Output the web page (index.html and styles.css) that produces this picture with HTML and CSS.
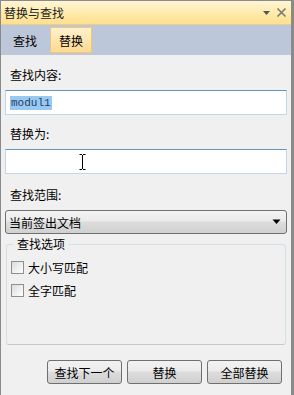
FILE: index.html
```html
<!DOCTYPE html>
<html>
<head>
  <meta charset="utf-8">
  <meta name="viewport" content="width=device-width, initial-scale=1.0">
  <link rel="stylesheet" href="styles.css">
</head>
<body>
  <div class="panel">
    <div class="title-bar">
      <div class="title-text">替换与查找</div>
      <div class="title-buttons">
        <svg class="pin" width="9" height="6" viewBox="0 0 9 6"><path d="M1 1h7L4.5 5z" fill="#555"/></svg>
        <svg class="close" width="11" height="11" viewBox="0 0 11 11"><path d="M1.5 1.5l8 8M9.5 1.5l-8 8" stroke="#777" stroke-width="1.6"/></svg>
      </div>
    </div>
    <div class="tabs">
      <div class="tab">查找</div>
      <div class="tab active">替换</div>
    </div>
    <div class="content">
      <div class="label">查找内容:</div>
      <div class="textbox"><span class="selected">modul1</span></div>
      <div class="label">替换为:</div>
      <div class="textbox last">
        <svg class="ibeam" width="7" height="16" viewBox="0 0 7 16"><path d="M0.5 0.5h2.5M4 0.5h2.5M3.5 1v14M0.5 15.5h2.5M4 15.5h2.5" stroke="#000" stroke-width="1"/></svg>
      </div>
      <div class="label">查找范围:</div>
      <div class="select">
        <span>当前签出文档</span>
        <svg width="9" height="6" viewBox="0 0 9 6"><path d="M0.5 0.5h8L4.5 5z" fill="#000"/></svg>
      </div>
      <div class="group">
        <div class="legend">查找选项</div>
        <label class="check"><span class="box"></span>大小写匹配</label>
        <label class="check"><span class="box"></span>全字匹配</label>
      </div>
      <div class="buttons">
        <button class="btn">查找下一个</button>
        <button class="btn">替换</button>
        <button class="btn">全部替换</button>
      </div>
    </div>
  </div>
</body>
</html>
```

FILE: styles.css
```css
* {
  margin: 0;
  padding: 0;
  box-sizing: border-box;
  font-family: 'Noto Sans CJK SC', 'Liberation Sans', sans-serif;
}

body {
  width: 294px;
  height: 395px;
  background: #f0f0f0;
  color: #000;
  overflow: hidden;
}

.panel {
  width: 294px;
  height: 395px;
  display: flex;
  flex-direction: column;
  border-left: 1px solid #8a8a8a;
  border-top: 1px solid #8a8a8a;
  border-right: 3px solid #8a8a8a;
  background: #f0f0f0;
}

.title-bar {
  height: 24px;
  display: flex;
  align-items: center;
  padding: 0 4px 0 3px;
  background: linear-gradient(#fff6d6, #ffe9a6 60%, #ffdf8e);
  border-bottom: 1px solid #e8cf8a;
}

.title-text {
  flex-grow: 1;
  font-size: 12px;
  color: #222;
}

.title-buttons {
  display: flex;
  align-items: center;
  gap: 5px;
}

.pin {
  margin-top: 1px;
}

.tabs {
  height: 30px;
  display: flex;
  align-items: center;
  padding: 0 0 0 3px;
  background: #bcc8d9;
}

.tab {
  height: 26px;
  padding: 0 8px;
  margin-right: 4px;
  display: flex;
  align-items: center;
  font-size: 12px;
  border: 1px solid transparent;
}

.tab.active {
  background: linear-gradient(#fff1cf, #ffd98f);
  border-color: #f0c67a;
}

.content {
  flex-grow: 1;
  display: flex;
  flex-direction: column;
  padding: 11px 4px 0 4px;
  background: #f0f0f0;
}

.label {
  font-size: 12px;
  height: 18px;
  line-height: 18px;
  padding-left: 5px;
  margin: 0 0 6px;
}

.textbox {
  height: 25px;
  display: flex;
  align-items: center;
  padding-left: 4px;
  background: #fff;
  border: 1px solid #c2d6e8;
  border-top-color: #6a93ba;
  margin-bottom: 10px;
  position: relative;
}

.textbox.last {
  margin-bottom: 12px;
}

.selected {
  font-family: 'Liberation Mono', monospace;
  font-size: 11px;
  line-height: 14px;
  background: #99c9f0;
  color: #1d3f6d;
  padding: 0 1px;
}

.ibeam {
  position: absolute;
  left: 73px;
  top: 4px;
}

.select {
  height: 24px;
  display: flex;
  align-items: center;
  justify-content: space-between;
  padding: 0 5px 0 3px;
  font-size: 12px;
  border: 1px solid #707070;
  border-radius: 3px;
  background: linear-gradient(#f3f3f3, #ebebeb 45%, #dddddd 50%, #d0d0d0);
  margin-bottom: 10px;
}

.group {
  height: 101px;
  margin: 0 1px;
  border: 1px solid #d5dfe5;
  border-bottom-color: #c8c8c8;
  border-radius: 3px;
  position: relative;
  padding: 13px 4px 0;
  display: flex;
  flex-direction: column;
  gap: 5px;
}

.legend {
  position: absolute;
  left: 6px;
  top: -10px;
  padding: 0 4px;
  background: #f0f0f0;
  font-size: 12px;
  line-height: 18px;
}

.check {
  display: flex;
  align-items: center;
  gap: 4px;
  font-size: 12px;
  height: 18px;
}

.box {
  width: 13px;
  height: 13px;
  border: 1px solid #8e8f8f;
  background: linear-gradient(135deg, #dcdcdc, #fff);
}

.buttons {
  display: flex;
  justify-content: flex-end;
  gap: 5px;
  padding: 15px 5px 0 0;
}

.btn {
  width: 75px;
  height: 24px;
  font-size: 12px;
  border: 1px solid #707070;
  border-radius: 3px;
  background: linear-gradient(#f2f2f2, #ebebeb 45%, #dddddd 50%, #cfcfcf);
}
```
